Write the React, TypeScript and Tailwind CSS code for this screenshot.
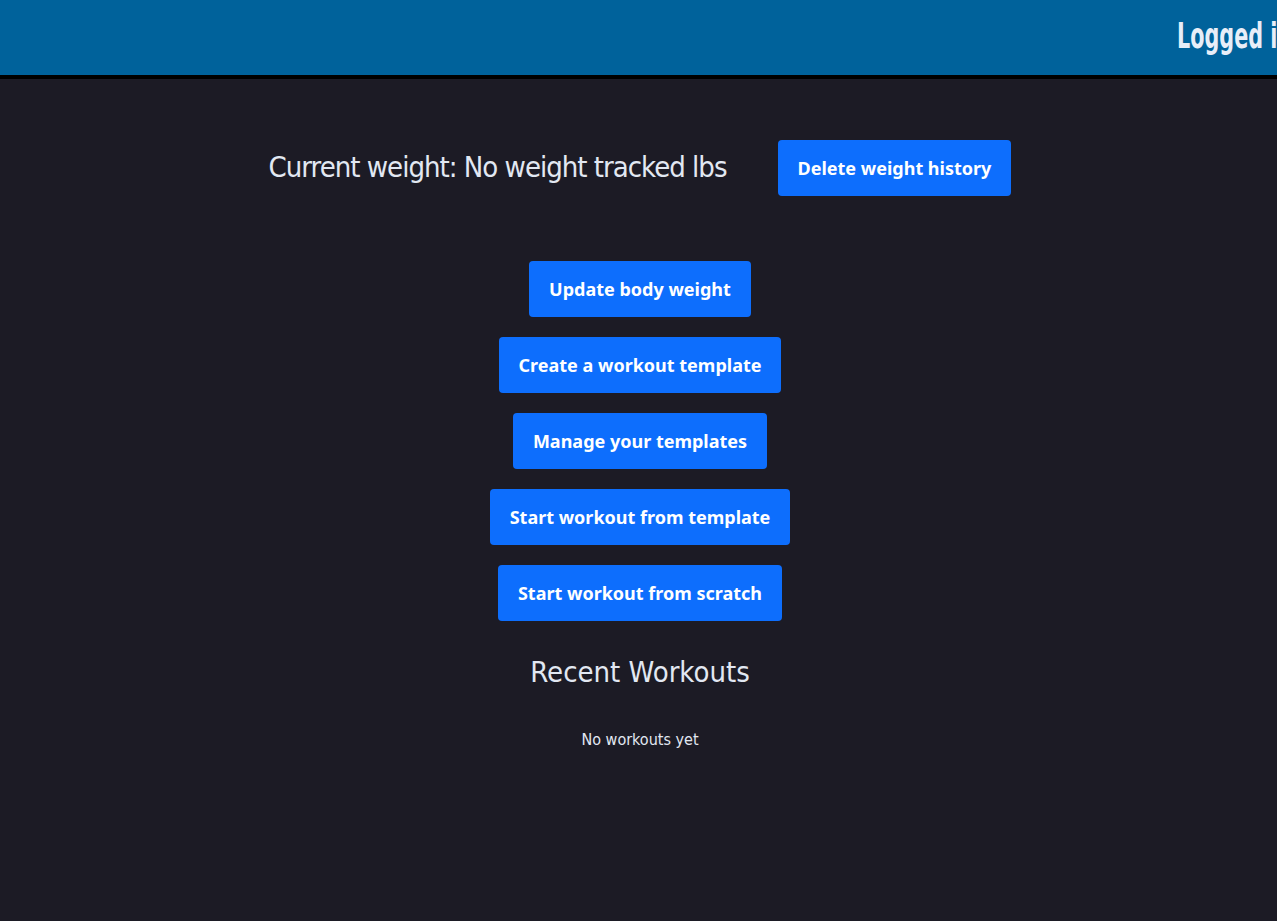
import React from 'react';

const actions = [
  'Update body weight',
  'Create a workout template',
  'Manage your templates',
  'Start workout from template',
  'Start workout from scratch',
];

const thin = { fontFamily: '"DejaVu Sans Condensed", "DejaVu Sans", sans-serif' };
const btnFont = { fontFamily: '"Noto Sans", "Open Sans", sans-serif' };

function Btn({ label }: { label: string }) {
  return (
    <button
      style={btnFont}
      className="h-14 px-5 rounded-[4px] bg-[#0d6efd] text-white text-[18px] font-bold"
    >
      {label}
    </button>
  );
}

export default function App() {
  return (
    <div className="min-h-screen bg-[#1c1b25] text-[#e2e8f2] overflow-hidden">
      <header className="h-[79px] bg-[#00629b] border-b-4 border-black flex items-center justify-start overflow-hidden">
        <div className="shrink-0 pl-[1177px]">
          <div
            style={{ fontFamily: '"DejaVu Sans Condensed", "DejaVu Sans", sans-serif' }}
            className="whitespace-nowrap text-[36px] font-bold text-[#e8eef8] origin-left scale-x-[0.64] -mt-1"
          >
            Logged in as user
          </div>
        </div>
      </header>

      <main className="flex flex-col items-center pl-[3px]">
        <div className="mt-[61px] flex items-center gap-[51px]">
          <span style={thin} className="text-[29px] tracking-[-1px]">
            Current weight: No weight tracked lbs
          </span>
          <Btn label="Delete weight history" />
        </div>

        <div className="mt-[65px] flex flex-col items-center gap-5">
          {actions.map((a) => (
            <Btn key={a} label={a} />
          ))}
        </div>

        <h2 style={thin} className="mt-[33px] text-[29px] leading-[36px]">
          Recent Workouts
        </h2>
        <p style={thin} className="mt-[38px] text-[16px] leading-6">
          No workouts yet
        </p>
      </main>
    </div>
  );
}
